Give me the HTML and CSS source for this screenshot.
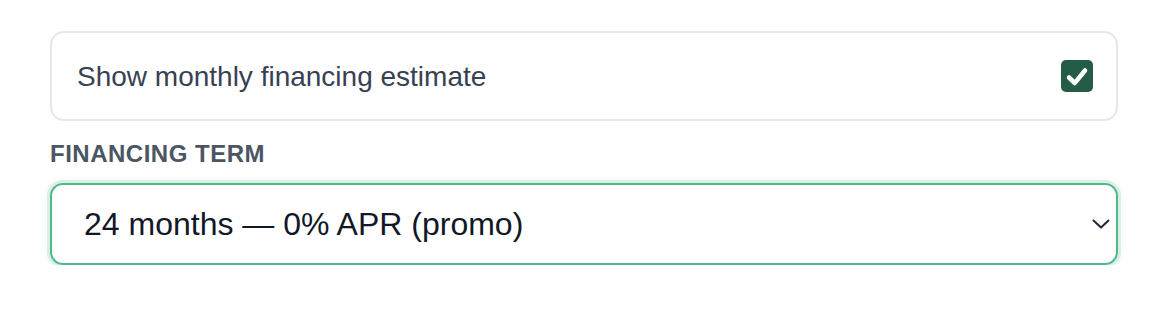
FILE: index.html
```html
<!DOCTYPE html>
<html lang="en">
<head>
<meta charset="utf-8">
<title>Financing</title>
<link rel="stylesheet" href="styles.css">
</head>
<body>
<div class="panel">
  <label class="toggle-card">
    <span class="toggle-text">Show monthly financing estimate</span>
    <span class="check">
      <svg viewBox="0 0 32 32" width="32" height="32" aria-hidden="true">
        <path d="M8 17.5 L13.8 23 L24 10.5" fill="none" stroke="#fff" stroke-width="4.5" stroke-linecap="round" stroke-linejoin="round"/>
      </svg>
    </span>
  </label>
  <div class="field-label">FINANCING TERM</div>
  <div class="select-wrap">
    <select class="select">
      <option>24 months — 0% APR (promo)</option>
      <option>36 months — 4.9% APR</option>
      <option>48 months — 6.9% APR</option>
    </select>
    <svg class="chev" viewBox="0 0 18 10" width="18" height="10" aria-hidden="true">
      <path d="M1.5 1.5 L9 8.5 L16.5 1.5" fill="none" stroke="#1f2937" stroke-width="2" stroke-linecap="round" stroke-linejoin="round"/>
    </svg>
  </div>
</div>
</body>
</html>
```
FILE: styles.css
```css
* { box-sizing: border-box; }
html, body { margin: 0; background: #ffffff; }
body {
  font-family: "Liberation Sans", Arial, sans-serif;
}
.panel {
  padding: 31px 0 0 50px;
  width: 1118px;
}
.toggle-card {
  display: flex;
  align-items: center;
  justify-content: space-between;
  height: 90px;
  padding: 0 23px 0 25px;
  border: 2px solid #e6e7eb;
  border-radius: 14px;
  background: #fff;
}
.toggle-text {
  font-size: 28px;
  color: #374151;
  line-height: 1;
  margin-top: 1px;
}
.check {
  width: 32px;
  height: 32px;
  border-radius: 5px;
  background: #245c45;
  display: flex;
}
.field-label {
  margin-top: 19px;
  font-size: 24px;
  font-weight: 700;
  letter-spacing: 0.5px;
  color: #4b5563;
  line-height: 28px;
}
.select-wrap {
  position: relative;
  margin-top: 15px;
}
.select {
  appearance: none;
  -webkit-appearance: none;
  display: block;
  width: 100%;
  height: 82px;
  margin: 0;
  padding: 0 60px 0 32px;
  font-family: "Liberation Sans", Arial, sans-serif;
  font-size: 32px;
  color: #111827;
  background: #fff;
  border: 2px solid #52b98a;
  border-radius: 13px;
  box-shadow: 0 0 0 3px rgba(82, 185, 138, 0.16), 0 0 6px 2px rgba(82, 185, 138, 0.12);
  outline: none;
}
.chev {
  position: absolute;
  right: 8px;
  top: 36px;
  pointer-events: none;
}
```
